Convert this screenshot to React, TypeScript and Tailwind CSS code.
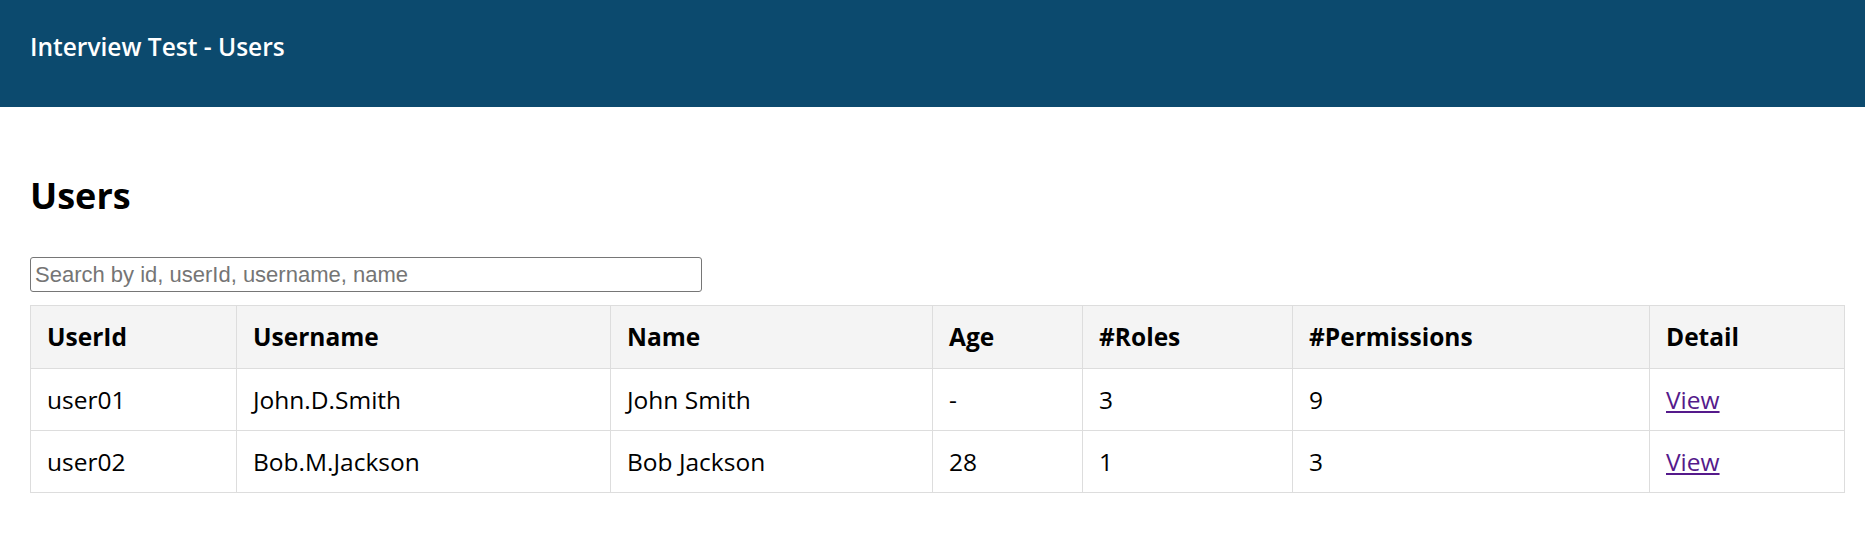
const users = [
  { userId: 'user01', username: 'John.D.Smith', name: 'John Smith', age: '-', roles: 3, permissions: 9 },
  { userId: 'user02', username: 'Bob.M.Jackson', name: 'Bob Jackson', age: '28', roles: 1, permissions: 3 },
];

const columns = [
  { label: 'UserId', width: 'w-[206px]' },
  { label: 'Username', width: 'w-[374px]' },
  { label: 'Name', width: 'w-[322px]' },
  { label: 'Age', width: 'w-[150px]' },
  { label: '#Roles', width: 'w-[210px]' },
  { label: '#Permissions', width: 'w-[357px]' },
  { label: 'Detail', width: 'w-[195px]' },
];

const App = () => {
  return (
    <div className="min-h-screen bg-white text-black font-['Open_Sans',sans-serif]">
      <header className="h-[107px] bg-[#0c4a6e] pl-[30px] pt-[29px]">
        <span className="text-[24.5px] leading-[36px] font-semibold text-white">
          Interview Test - Users
        </span>
      </header>

      <main className="px-[30px] pr-[20px]">
        <h1 className="mt-[65px] text-[36px] leading-[48px] font-bold">Users</h1>

        <input
          type="text"
          placeholder="Search by id, userId, username, name"
          className="mt-[37px] block w-[672px] h-[35px] px-[4px] border border-[#767676] rounded-[3px] text-[22px] font-['Liberation_Sans',sans-serif] placeholder:text-[#757575] focus:outline-0"
        />

        <table className="mt-[13px] w-full table-fixed border-collapse text-[24.5px]">
          <colgroup>
            {columns.map((col) => (
              <col key={col.label} className={col.width} />
            ))}
          </colgroup>
          <thead>
            <tr className="bg-[#f4f4f4]">
              {columns.map((col) => (
                <th
                  key={col.label}
                  className="border border-[#dddddd] px-[16px] py-[13px] leading-[36px] text-left font-bold"
                >
                  {col.label}
                </th>
              ))}
            </tr>
          </thead>
          <tbody>
            {users.map((user) => (
              <tr key={user.userId}>
                <td className="border border-[#dddddd] px-[16px] py-[12px] leading-[37px]">{user.userId}</td>
                <td className="border border-[#dddddd] px-[16px] py-[12px] leading-[37px]">{user.username}</td>
                <td className="border border-[#dddddd] px-[16px] py-[12px] leading-[37px]">{user.name}</td>
                <td className="border border-[#dddddd] px-[16px] py-[12px] leading-[37px]">{user.age}</td>
                <td className="border border-[#dddddd] px-[16px] py-[12px] leading-[37px]">{user.roles}</td>
                <td className="border border-[#dddddd] px-[16px] py-[12px] leading-[37px]">{user.permissions}</td>
                <td className="border border-[#dddddd] px-[16px] py-[12px] leading-[37px]">
                  <a href="#" className="text-[#551a8b] underline">
                    View
                  </a>
                </td>
              </tr>
            ))}
          </tbody>
        </table>
      </main>
    </div>
  );
};

export default App;
